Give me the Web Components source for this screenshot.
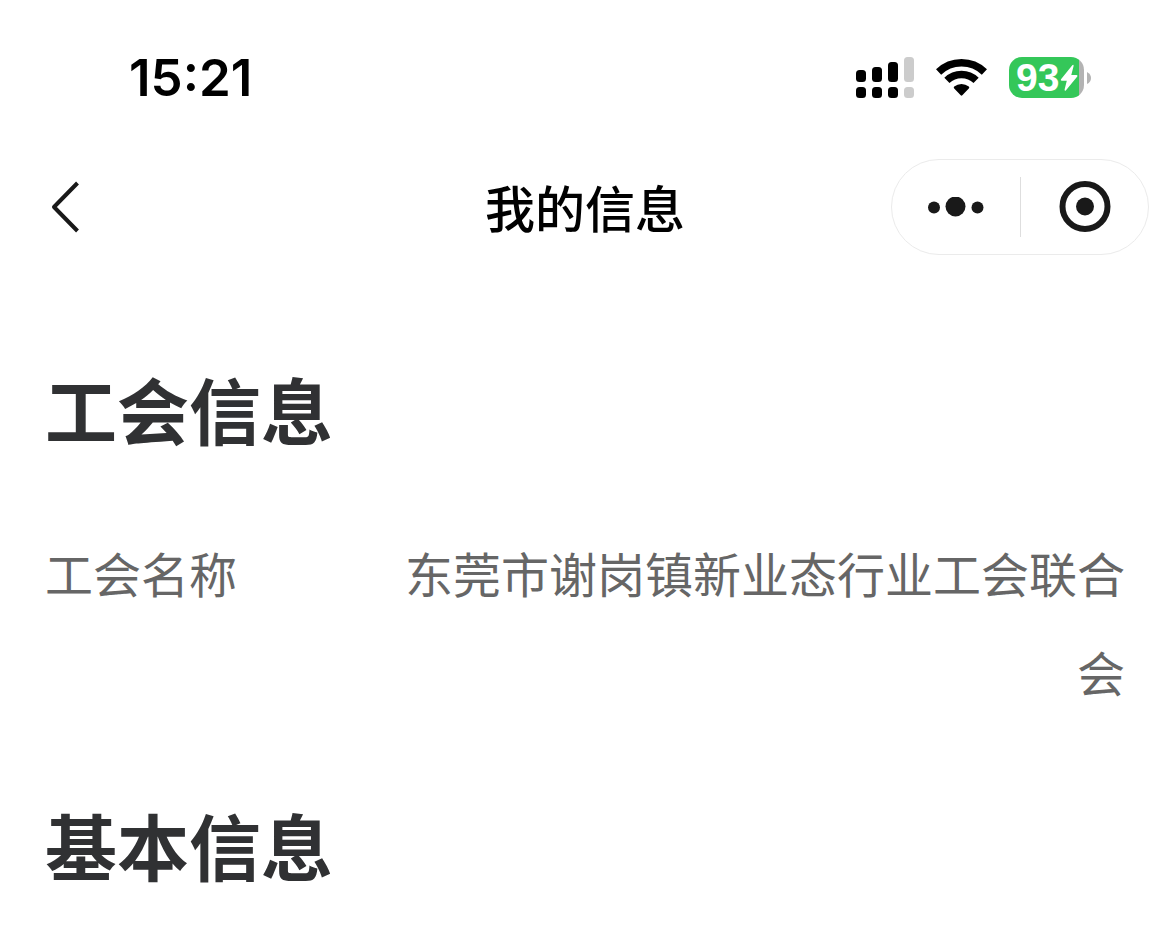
<!DOCTYPE html>
<html lang="zh-CN">
<head>
<meta charset="utf-8">
<meta name="viewport" content="width=device-width, initial-scale=1">
<title>我的信息</title>
<style>
  body {
    margin: 0;
    background: #fff;
    color: #000;
    font-family: "Noto Sans", "Noto Sans CJK SC", sans-serif;
  }
</style>
</head>
<body>
<status-bar time="15:21" battery="93"></status-bar>
<nav-bar>我的信息</nav-bar>
<main>
  <info-section>
    <span slot="title">工会信息</span>
    <info-row label="工会名称">东莞市谢岗镇新业态行业工会联合会</info-row>
  </info-section>
  <info-section>
    <span slot="title">基本信息</span>
  </info-section>
</main>

<script>
// Phone status bar: clock on the left, signal / wifi / battery on the right
class StatusBar extends HTMLElement {
  constructor() {
    super();
    this.attachShadow({ mode: 'open' });
  }

  connectedCallback() {
    this.shadowRoot.innerHTML = `
      <style>
        :host {
          display: flex;
          justify-content: space-between;
          align-items: center;
          box-sizing: border-box;
          height: 141px;
          padding: 14px 79px 0 129px;
          font-family: Inter, sans-serif;
        }

        time {
          font-size: 51px;
          font-weight: 600;
          line-height: 60px;
        }

        .icons {
          display: flex;
          align-items: center;
          gap: 22px;
        }

        svg {
          display: block;
        }

        .battery {
          display: flex;
          align-items: center;
          gap: 3px;
        }

        .level {
          display: flex;
          align-items: center;
          gap: 1px;
          box-sizing: border-box;
          width: 75px;
          height: 41px;
          padding-left: 7px;
          border-radius: 13px;
          background: linear-gradient(to right, #34c759 70px, #b3b3b3 70px);
          color: #fff;
          font-family: "Liberation Sans", sans-serif;
          font-size: 39px;
          font-weight: 700;
          line-height: 41px;
        }
      </style>

      <time>${this.getAttribute('time')}</time>
      <div class="icons">
        <svg width="58" height="41" viewBox="0 0 58 41" aria-hidden="true">
          <rect x="0" y="13" width="10" height="12" rx="3.5"/>
          <rect x="16" y="10" width="10" height="15" rx="3.5"/>
          <rect x="32" y="5" width="10" height="20" rx="3.5"/>
          <rect x="0" y="30" width="10" height="11" rx="3.5"/>
          <rect x="16" y="30" width="10" height="11" rx="3.5"/>
          <rect x="32" y="30" width="10" height="11" rx="3.5"/>
          <rect x="48" y="0" width="10" height="25" rx="3.5" fill="#ccc"/>
          <rect x="48" y="30" width="10" height="11" rx="3.5" fill="#ccc"/>
        </svg>
        <svg width="51" height="41" viewBox="0 0 51 41" aria-hidden="true">
          <g fill="none" stroke="#000" stroke-width="7.4">
            <path d="M2.6 15a33 33 0 0 1 45.8 0"/>
            <path d="M10.9 23.4a21 21 0 0 1 29.200 0"/>
          </g>
          <path d="M18.200 29.500a11.500 11.500 0 0 1 14.600 0q1 .9 0 1.900l-6.500 6.900q-.8.7-1.6 0l-6.500-6.900q-1-1 0-1.900z"/>
        </svg>
        <div class="battery">
          <div class="level">
            <span>${this.getAttribute('battery')}</span>
            <svg width="18" height="28" viewBox="0 0 18 28" aria-hidden="true">
              <path fill="#fff" d="M12.3 1.2 1 15.2q-.7 1.3.7 1.5h5.1L4.6 25.6q-.2 1.8 1.2.8L17.3 12.5q.7-1.3-.8-1.5h-5.2l2.3-8.9q.2-1.9-1.3-.9z"/>
            </svg>
          </div>
          <svg width="4" height="12" viewBox="0 0 4 12" aria-hidden="true">
            <path fill="#b3b3b3" d="M0 0q4 2 4 6t-4 6z"/>
          </svg>
        </div>
      </div>
    `;
  }
}

// Title bar with the back button and the mini program capsule
class NavBar extends HTMLElement {
  constructor() {
    super();
    this.attachShadow({ mode: 'open' });
  }

  connectedCallback() {
    this.shadowRoot.innerHTML = `
      <style>
        :host {
          display: grid;
          grid-template-columns: 1fr auto 1fr;
          align-items: center;
          height: 132px;
          padding: 0 21px;
        }

        h1 {
          margin: 0;
          padding-top: 3px;
          font-size: 50px;
          font-weight: 500;
          line-height: 72px;
        }

        button {
          display: flex;
          align-items: center;
          justify-content: center;
          padding: 0;
          border: 0;
          background: none;
          color: #191919;
          cursor: pointer;
        }

        .back {
          width: 88px;
          height: 96px;
        }

        .capsule {
          display: flex;
          align-items: center;
          justify-self: end;
          box-sizing: border-box;
          width: 258px;
          height: 96px;
          border: 1px solid #ebebeb;
          border-radius: 48px;
        }

        .capsule button {
          flex: 1;
          height: 94px;
        }

        .divider {
          width: 1px;
          height: 60px;
          background: #dedede;
        }
      </style>

      <button class="back" type="button" aria-label="返回">
        <svg width="28" height="52" viewBox="0 0 28 52" aria-hidden="true">
          <path d="M26.5 2 3 26l23.5 24" fill="none" stroke="currentColor" stroke-width="4" stroke-linejoin="round"/>
        </svg>
      </button>
      <h1><slot></slot></h1>
      <div class="capsule">
        <button type="button" aria-label="更多">
          <svg width="57" height="20" viewBox="0 0 57 20" fill="currentColor" aria-hidden="true">
            <circle cx="7" cy="10.5" r="6"/>
            <circle cx="28.5" cy="9.5" r="10"/>
            <circle cx="50.5" cy="10.5" r="6"/>
          </svg>
        </button>
        <div class="divider"></div>
        <button type="button" aria-label="关闭">
          <svg width="54" height="52" viewBox="0 0 54 52" aria-hidden="true">
            <circle cx="28" cy="25.5" r="22.5" fill="none" stroke="currentColor" stroke-width="6"/>
            <circle cx="28" cy="25.5" r="9" fill="currentColor"/>
          </svg>
        </button>
      </div>
    `;
  }
}

// Titled block holding info rows
class InfoSection extends HTMLElement {
  constructor() {
    super();
    this.attachShadow({ mode: 'open' });
  }

  connectedCallback() {
    this.shadowRoot.innerHTML = `
      <style>
        :host {
          display: block;
          padding: 84px 45px 0;
        }

        :host(:not(:first-child)) {
          padding-top: 70px;
        }

        h2 {
          margin: 0 0 60px;
          color: #303133;
          font-size: 72px;
          font-weight: 700;
          line-height: 108px;
        }
      </style>

      <h2><slot name="title"></slot></h2>
      <slot></slot>
    `;
  }
}

// Label on the left, right-aligned value that can wrap
class InfoRow extends HTMLElement {
  constructor() {
    super();
    this.attachShadow({ mode: 'open' });
  }

  connectedCallback() {
    this.shadowRoot.innerHTML = `
      <style>
        :host {
          display: block;
          color: #666;
          font-size: 48px;
          line-height: 99px;
        }

        dl {
          display: flex;
          justify-content: space-between;
          margin: 0;
        }

        dt {
          flex: none;
        }

        dd {
          width: 70%;
          margin: 0;
          text-align: right;
        }
      </style>

      <dl>
        <dt>${this.getAttribute('label')}</dt>
        <dd><slot></slot></dd>
      </dl>
    `;
  }
}

customElements.define('status-bar', StatusBar);
customElements.define('nav-bar', NavBar);
customElements.define('info-section', InfoSection);
customElements.define('info-row', InfoRow);
</script>
</body>
</html>
